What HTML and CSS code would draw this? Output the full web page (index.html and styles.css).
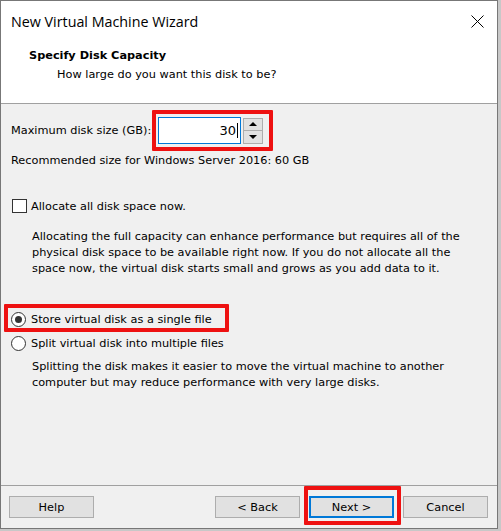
FILE: index.html
```html
<!DOCTYPE html>
<html>
<head>
<meta charset="utf-8">
<link rel="stylesheet" href="styles.css">
</head>
<body>
<div class="window">
  <div class="top">
    <div class="titlebar">
      <span class="title">New Virtual Machine Wizard</span>
      <svg class="close" width="13" height="13" viewBox="0 0 13 13"><path d="M0.5 0.5 L12.5 12.5 M12.5 0.5 L0.5 12.5" stroke="#000" stroke-width="1" fill="none"/></svg>
    </div>
    <div class="header">
      <div class="h-title">Specify Disk Capacity</div>
      <div class="h-sub">How large do you want this disk to be?</div>
    </div>
  </div>
  <div class="content">
    <div class="size-row">
      <span class="size-label">Maximum disk size (GB):</span>
      <div class="mark mark-size">
        <div class="input"><span class="val">30</span><span class="caret"></span></div>
        <div class="spin">
          <span class="spin-btn"><i class="tri up"></i></span>
          <span class="spin-btn"><i class="tri down"></i></span>
        </div>
      </div>
    </div>
    <div class="rec">Recommended size for Windows Server 2016: 60 GB</div>
    <div class="check-row"><span class="checkbox"></span><span class="opt-label">Allocate all disk space now.</span></div>
    <p class="desc desc-alloc">Allocating the full capacity can enhance performance but requires all of the<br>physical disk space to be available right now. If you do not allocate all the<br>space now, the virtual disk starts small and grows as you add data to it.</p>
    <div class="mark mark-radio">
      <div class="radio-row"><span class="radio checked"></span><span class="opt-label">Store virtual disk as a single file</span></div>
    </div>
    <div class="radio-row radio-second"><span class="radio"></span><span class="opt-label">Split virtual disk into multiple files</span></div>
    <p class="desc desc-split">Splitting the disk makes it easier to move the virtual machine to another<br>computer but may reduce performance with very large disks.</p>
  </div>
  <div class="footer">
    <button class="btn">Help</button>
    <span class="spacer"></span>
    <button class="btn">&lt; Back</button>
    <span class="mark mark-next"><button class="btn default">Next &gt;</button></span>
    <button class="btn">Cancel</button>
  </div>
</div>
</body>
</html>
```

FILE: styles.css
```css
html, body {
  margin: 0;
  padding: 0;
}
body {
  background: #c8c8c8;
  width: 501px;
  height: 531px;
  overflow: hidden;
  font-family: "DejaVu Sans", sans-serif;
  font-size: 11.3px;
  color: #000;
}
.window {
  width: 498px;
  height: 529px;
  box-sizing: border-box;
  border: 1px solid #777;
  background: #f0f0f0;
  display: flex;
  flex-direction: column;
}
.top {
  height: 102px;
  flex: none;
  background: #fff;
  border-bottom: 1px solid #a0a0a0;
}
.titlebar {
  height: 40px;
  display: flex;
  align-items: center;
  justify-content: space-between;
  padding: 0 13px 0 10px;
}
.title {
  font-family: "Open Sans", "Noto Sans", sans-serif;
  font-size: 14.3px;
  color: #000;
}
.close {
  display: block;
}
.header {
  padding: 7px 0 0 28px;
}
.h-title {
  font-weight: bold;
  line-height: 16px;
  font-size: 11.3px;
}
.h-sub {
  margin-top: 3px;
  padding-left: 28px;
  line-height: 16px;
}
.content {
  height: 382px;
  flex: none;
  box-sizing: border-box;
  border-bottom: 1px solid #a0a0a0;
  padding-left: 10px;
}
.size-row {
  margin-top: 6px;
  display: flex;
  align-items: center;
}
.size-label {
  width: 141px;
  flex: none;
  white-space: nowrap;
}
.mark {
  border: 4px solid #ee1111;
  border-radius: 1px;
}
.mark-size {
  display: flex;
  align-items: center;
  gap: 2px;
  padding: 3px 6px 3px 2px;
}
.input {
  width: 83px;
  height: 27px;
  box-sizing: border-box;
  border: 1px solid #0078d7;
  background: #fff;
  display: flex;
  align-items: center;
  justify-content: flex-end;
  padding-right: 2px;
  font-size: 13px;
}
.caret {
  width: 1px;
  height: 15px;
  background: #000;
  margin-left: 1px;
}
.spin {
  width: 20px;
  height: 26px;
  box-sizing: border-box;
  border: 1px solid #adadad;
  display: flex;
  flex-direction: column;
  background: #e1e1e1;
}
.spin-btn {
  flex: 1;
  display: flex;
  align-items: center;
  justify-content: center;
}
.spin-btn + .spin-btn {
  border-top: 1px solid #adadad;
}
.tri {
  width: 0;
  height: 0;
  border-left: 4px solid transparent;
  border-right: 4px solid transparent;
}
.tri.up {
  border-bottom: 4px solid #000;
}
.tri.down {
  border-top: 4px solid #000;
}
.rec {
  margin-top: 2px;
  line-height: 16px;
}
.check-row {
  margin-top: 29px;
  display: flex;
  align-items: center;
  height: 16px;
}
.checkbox {
  width: 15px;
  height: 14px;
  box-sizing: border-box;
  border: 1px solid #333;
  background: #fff;
  margin-left: 1px;
  margin-right: 4px;
}
.desc {
  margin: 0;
  padding-left: 21px;
  line-height: 16px;
  white-space: nowrap;
}
.desc-alloc {
  margin-top: 15px;
}
.mark-radio {
  margin-top: 27px;
  margin-left: -7px;
  width: 225px;
  box-sizing: border-box;
  padding: 3px 0 1px 3px;
}
.radio-row {
  display: flex;
  align-items: center;
  height: 16px;
  white-space: nowrap;
}
.radio-second {
  margin-top: 3px;
}
.radio {
  width: 15px;
  height: 15px;
  box-sizing: border-box;
  border: 1px solid #333;
  border-radius: 50%;
  background: #fff;
  margin-right: 5px;
  display: flex;
  align-items: center;
  justify-content: center;
}
.radio.checked::after {
  content: "";
  width: 7px;
  height: 7px;
  border-radius: 50%;
  background: #333;
}
.desc-split {
  margin-top: 8px;
}
.footer {
  height: 41px;
  flex: none;
  box-sizing: border-box;
  padding: 10px 9px 0 8px;
  display: flex;
  align-items: flex-start;
  gap: 9px;
}
.spacer {
  flex: 1;
}
.btn {
  width: 85px;
  height: 22px;
  box-sizing: border-box;
  border: 1px solid #adadad;
  background: #e1e1e1;
  font-family: inherit;
  font-size: 11.3px;
  color: #000;
  padding: 0;
  margin: 0;
}
.btn.default {
  border: 2px solid #0078d7;
  display: block;
}
.mark-next {
  display: block;
  margin: -10px -7px -7px -5px;
  padding: 6px 3px 3px 1px;
}
```
